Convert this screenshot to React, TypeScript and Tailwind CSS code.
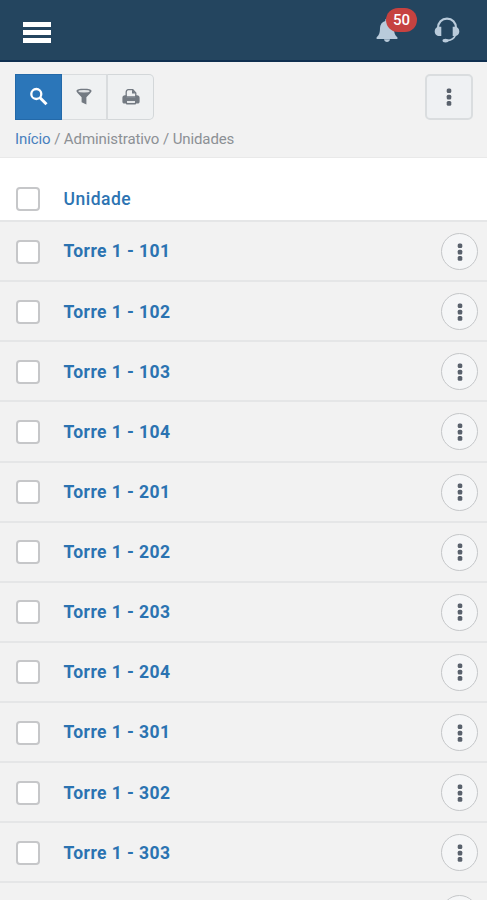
import React from 'react';

const UNITS = [
  'Torre 1 - 101',
  'Torre 1 - 102',
  'Torre 1 - 103',
  'Torre 1 - 104',
  'Torre 1 - 201',
  'Torre 1 - 202',
  'Torre 1 - 203',
  'Torre 1 - 204',
  'Torre 1 - 301',
  'Torre 1 - 302',
  'Torre 1 - 303',
];

const Dots: React.FC = () => (
  <svg width="6" height="20" viewBox="0 0 6 20" fill="#59616c">
    <rect x="0.700" y="1.500" width="4.600" height="4.600" rx="1.500" />
    <rect x="0.700" y="7.800" width="4.600" height="4.600" rx="1.500" />
    <rect x="0.700" y="14.100" width="4.600" height="4.600" rx="1.500" />
  </svg>
);

const Checkbox: React.FC = () => (
  <span className="block w-[24px] h-[24px] shrink-0 rounded-[4px] border-2 border-[#c6c7c9] bg-white"></span>
);

const RowMenu: React.FC = () => (
  <button className="ml-auto w-[37px] h-[37px] shrink-0 rounded-full border border-[#c5c7c9] bg-[#f5f6f7] flex items-center justify-center">
    <Dots />
  </button>
);

const App: React.FC = () => {
  return (
    <div className="h-[900px] overflow-hidden bg-[#f2f2f2] font-[Roboto,sans-serif]">
      {/* Top bar */}
      <header className="h-[62px] bg-[#24455f] border-b-2 border-[#0f2f50] flex items-center justify-between pl-[23px] pr-[27px]">
        <button className="flex flex-col gap-[3px] mt-[4px]">
          <span className="block w-[28px] h-[5px] bg-white"></span>
          <span className="block w-[28px] h-[5px] bg-white"></span>
          <span className="block w-[28px] h-[5px] bg-white"></span>
        </button>
        <div className="flex items-center gap-[36px]">
          <button className="relative">
            <svg className="block" width="22" height="26" viewBox="0 0 22 26" fill="#b9cbdb">
              <path d="M11 1.500c-1 0-1.700.8-1.700 1.800v.6C6 4.800 4 7.500 4 11c0 5-1 7.200-3.400 9.300V22h20.800v-1.700C19 18.200 18 16 18 11c0-3.500-2-6.200-5.300-7.100v-.6c0-1-.7-1.800-1.700-1.800z" />
              <path d="M8 22.300h6c-.3 1.700-1.500 2.700-3 2.700s-2.700-1-3-2.700z" />
            </svg>
            <span className="absolute left-[10px] -top-[9px] w-[31px] h-[24px] rounded-full bg-[#c64240] text-white text-[15px] leading-[24px] font-medium text-center">50</span>
          </button>
          <svg className="block" width="26" height="26" viewBox="0 0 26 26" fill="none" stroke="#b9cbdb">
            <path d="M4 11C4 5.500 7.800 1.700 13 1.700S22 5.500 22 11" strokeWidth="2.200" />
            <path d="M21.500 18c-1.200 3-3.700 5-8 5.500" strokeWidth="1.800" />
            <path d="M7.300 9.800H5.500C2.500 9.800.7 11.600.7 14.300s1.800 4.800 4.800 4.800h1.800zM18.700 9.800h1.800c3 0 4.800 1.800 4.800 4.500s-1.800 4.800-4.800 4.800h-1.800z" fill="#b9cbdb" stroke="none" />
            <ellipse cx="11.500" cy="23.600" rx="3" ry="1.900" fill="#b9cbdb" stroke="none" />
          </svg>
        </div>
      </header>

      {/* Toolbar and breadcrumb */}
      <section className="h-[96px] border-b border-[#e9e9e9] pt-[12px] px-[15px]">
        <div className="flex justify-between">
          <div className="flex h-[46px]">
            <button className="w-[47px] bg-[#2b76b9] border border-[#2369a9] flex items-center justify-center">
              <svg width="20" height="20" viewBox="0 0 20 20" fill="none" stroke="#fff">
                <circle cx="7.300" cy="7" r="5" strokeWidth="2.300" />
                <path d="M11 10.700l6.500 6.500" strokeWidth="3" />
              </svg>
            </button>
            <button className="w-[46px] bg-[#eff1f2] border-y border-r-2 border-[#d9dcde] flex items-center justify-center">
              <svg width="16" height="18" viewBox="0 0 16 18">
                <path d="M.5 3C.5 1.300 3.500.8 8 .8s7.500.5 7.500 2.200c0 .8-.5 1.300-1.300 2.200l-3.800 4.100v7.200L5.600 14.300v-5L1.800 5.200C1 4.300.5 3.800.5 3z" fill="#737a82" />
                <ellipse cx="8" cy="3.200" rx="5.700" ry="1.200" fill="#dfe2e4" />
              </svg>
            </button>
            <button className="w-[46px] bg-[#eff1f2] border-y border-r border-[#d3d7d9] rounded-r-[5px] flex items-center justify-center">
              {/* Printer: paper behind, dark body with a light output slot */}
              <svg className="-mt-[1px]" width="18" height="18" viewBox="0 0 18 18">
                <path d="M4.200 9V4.200c0-1.600.7-2.500 2.200-2.500h4.400l3 3.200V9z" fill="#eff1f2" stroke="#737a82" strokeWidth="1.300" />
                <path d="M10 1.500v4h4z" fill="#737a82" />
                <path d="M3 7.200h1.500v2.300h9V7.200H15c1.600 0 2.600 1 2.600 2.600v3.600c0 1.400-.7 2-2 2h-1.400c-.3.800-.9 1.200-1.900 1.200H5.700c-1 0-1.600-.4-1.900-1.200H2.400c-1.300 0-2-.6-2-2V9.800c0-1.600 1-2.600 2.600-2.600z" fill="#737a82" />
                <path d="M5 13h8v1.200c0 .6-.3.900-.9.900H5.900c-.6 0-.9-.3-.9-.9z" fill="#e5e8ea" />
              </svg>
            </button>
          </div>
          <button className="w-[48px] h-[46px] -mr-px bg-[#eff1f3] border-2 border-[#dadddf] rounded-[5px] flex items-center justify-center">
            <Dots />
          </button>
        </div>
        <nav className="mt-[9px] text-[15px] leading-[20px] tracking-[-0.100px] text-[#8c9095] whitespace-pre">
          <a className="text-[#4880bd]">Início</a> / Administrativo / Unidades
        </nav>
      </section>

      {/* Units table */}
      <div className="h-[64px] bg-white border-b-2 border-[#e5e6e7] flex items-center pl-[16px] pt-[19px]">
        <Checkbox />
        <span className="ml-[23.5px] pt-[1px] text-[17.5px] font-medium tracking-[0.500px] text-[#2d74b2]">Unidade</span>
      </div>
      {UNITS.map((unit) => (
        <div key={unit} className="h-[60.130px] border-b-2 border-[#e5e6e7] flex items-center pt-[1px] pl-[16px] pr-[9px]">
          <Checkbox />
          <span className="ml-[23.5px] text-[17.5px] font-bold tracking-[0.420px] text-[#2b73b1]">{unit}</span>
          <RowMenu />
        </div>
      ))}
      {/* Next row peeks in at the bottom edge */}
      <div className="h-[60.130px] flex items-center pl-[16px] pr-[9px]">
        <RowMenu />
      </div>
    </div>
  );
};

export default App;
